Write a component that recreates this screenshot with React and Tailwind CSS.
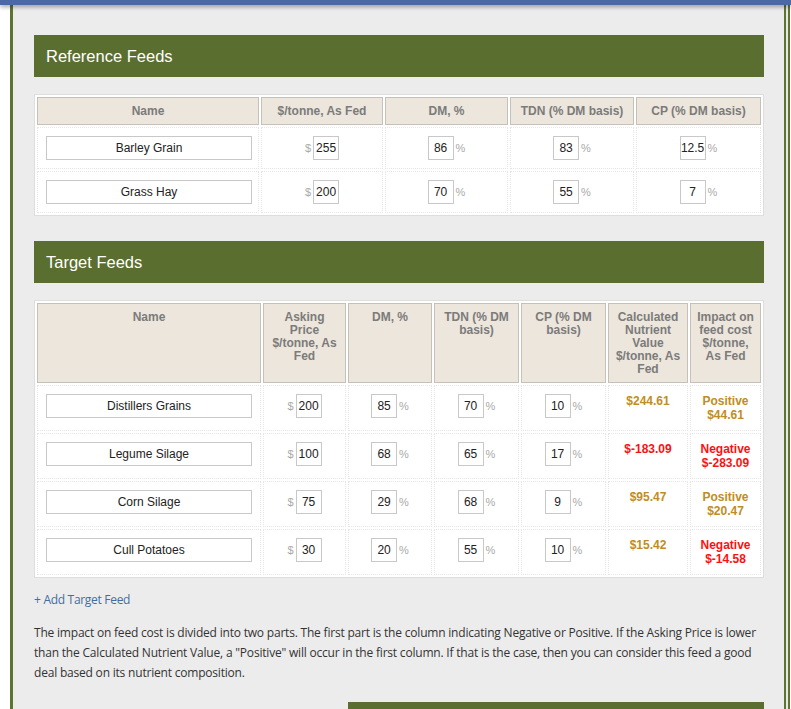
import React from "react";

const refFeeds = [
  { name: "Barley Grain", price: "255", dm: "86", tdn: "83", cp: "12.5" },
  { name: "Grass Hay", price: "200", dm: "70", tdn: "55", cp: "7" },
];

const targetFeeds = [
  { name: "Distillers Grains", price: "200", dm: "85", tdn: "70", cp: "10", calc: "$244.61", calcGood: true, sign: "Positive", impact: "$44.61", good: true },
  { name: "Legume Silage", price: "100", dm: "68", tdn: "65", cp: "17", calc: "$-183.09", calcGood: false, sign: "Negative", impact: "$-283.09", good: false },
  { name: "Corn Silage", price: "75", dm: "29", tdn: "68", cp: "9", calc: "$95.47", calcGood: true, sign: "Positive", impact: "$20.47", good: true },
  { name: "Cull Potatoes", price: "30", dm: "20", tdn: "55", cp: "10", calc: "$15.42", calcGood: true, sign: "Negative", impact: "$-14.58", good: false },
];

function SectionHeader({ title }) {
  return (
    <div className="h-[42px] bg-[#5a6e2f] flex items-center px-3">
      <h2 className="text-white text-[16.5px] font-['Liberation_Sans',Arial,sans-serif]">{title}</h2>
    </div>
  );
}

function SmallInput({ value }) {
  return (
    <input
      readOnly
      value={value}
      className="block w-[26px] h-[24px] border border-[#c8c8c8] bg-white text-center text-[12px] text-[#222] outline-none px-0"
    />
  );
}

function NameInput({ value }) {
  return (
    <input
      readOnly
      value={value}
      className="block w-[206px] h-[24px] mx-auto border border-[#c8c8c8] bg-white text-center text-[12px] text-[#222] outline-none"
    />
  );
}

function Price({ value }) {
  return (
    <div className="flex items-center justify-center gap-[2px] h-[24px]">
      <span className="text-[11px] text-[#aaa]">$</span>
      <SmallInput value={value} />
    </div>
  );
}

function Pct({ value }) {
  return (
    <div className="flex items-center justify-center gap-[2px] h-[24px]">
      <SmallInput value={value} />
      <span className="text-[11px] text-[#aaa]">%</span>
    </div>
  );
}

// header cell base (horizontal padding set per column)
const th = "bg-[#ede6dc] border border-[#c6c1b8] align-top text-center text-[12px] leading-[13px] font-bold text-[#7b7b7b] pt-[7px] pb-[6px]";
const td = "border border-dotted border-[#e6e6e6] py-[8px] align-top text-center";

export default function App() {
  return (
    <div className="w-[791px] h-[709px] overflow-hidden bg-white relative font-['Liberation_Sans',Arial,sans-serif]">
      {/* top bar */}
      <div className="absolute top-0 left-0 right-0 h-[5px] bg-[#4a69a6] shadow-[0_2px_4px_rgba(0,0,0,0.35)] z-10"></div>

      <div className="flex h-full">
        <div className="w-[10px] bg-white"></div>
        <div className="w-[3px] bg-[#5e7530]"></div>

        {/* main */}
        <div className="flex-1 bg-[#ececec] pl-[21px] pr-[20px] pt-[35px]">
          <SectionHeader title="Reference Feeds" />

          <div className="mt-[17px] bg-white border border-[#dedede]">
            <table className="w-full table-fixed border-separate border-spacing-[2px]">
              <thead>
                <tr>
                  <th className={`${th} px-[7px] w-[222px]`}>Name</th>
                  <th className={`${th} px-[7px] w-[122px]`}>$/tonne, As Fed</th>
                  <th className={`${th} px-[7px] w-[123px]`}>DM, %</th>
                  <th className={`${th} px-[7px] w-[124px]`}>TDN (% DM basis)</th>
                  <th className={`${th} px-[7px]`}>CP (% DM basis)</th>
                </tr>
              </thead>
              <tbody>
                {refFeeds.map((f) => (
                  <tr key={f.name}>
                    <td className={`${td} px-[8px]`}><NameInput value={f.name} /></td>
                    <td className={`${td} px-[8px]`}><Price value={f.price} /></td>
                    <td className={`${td} px-[8px]`}><Pct value={f.dm} /></td>
                    <td className={`${td} px-[8px]`}><Pct value={f.tdn} /></td>
                    <td className={`${td} px-[8px]`}><Pct value={f.cp} /></td>
                  </tr>
                ))}
              </tbody>
            </table>
          </div>

          <div className="mt-[25px]">
            <SectionHeader title="Target Feeds" />
          </div>

          <div className="mt-[17px] bg-white border border-[#dedede]">
            <table className="w-full table-fixed border-separate border-spacing-[2px]">
              <thead>
                <tr>
                  <th className={`${th} px-[7px] w-[224px]`}>Name</th>
                  <th className={`${th} px-[7px] w-[83px]`}>Asking Price $/tonne, As Fed</th>
                  <th className={`${th} px-[7px] w-[84px]`}>DM, %</th>
                  <th className={`${th} px-[7px] w-[85px]`}>TDN (% DM basis)</th>
                  <th className={`${th} px-[7px] w-[85px]`}>CP (% DM basis)</th>
                  <th className={`${th} px-[2px] w-[80px]`}>Calculated Nutrient Value $/tonne, As Fed</th>
                  <th className={`${th} px-[4px]`}>Impact on feed cost $/tonne, As Fed</th>
                </tr>
              </thead>
              <tbody>
                {targetFeeds.map((f) => {
                  const calcColor = f.calcGood ? "text-[#c18d22]" : "text-[#ff1010]";
                  const color = f.good ? "text-[#c18d22]" : "text-[#ff1010]";
                  return (
                    <tr key={f.name}>
                      <td className={`${td} px-[8px]`}><NameInput value={f.name} /></td>
                      <td className={`${td} px-[8px]`}><Price value={f.price} /></td>
                      <td className={`${td} px-[8px]`}><Pct value={f.dm} /></td>
                      <td className={`${td} px-[8px]`}><Pct value={f.tdn} /></td>
                      <td className={`${td} px-[8px]`}><Pct value={f.cp} /></td>
                      <td className={`${td} px-[2px] text-[12px] leading-[14px] font-bold ${calcColor}`}>{f.calc}</td>
                      <td className={`${td} px-0 text-[12px] leading-[14px] font-bold ${color}`}>
                        <div>{f.sign}</div>
                        <div>{f.impact}</div>
                      </td>
                    </tr>
                  );
                })}
              </tbody>
            </table>
          </div>

          <div className="mt-[13px] text-[12px] text-[#3c6fa6] font-['Open_Sans',sans-serif] tracking-[-0.3px]">+ Add Target Feed</div>

          <p className="mt-[14px] text-[12px] leading-[20px] text-[#333] font-['Open_Sans',sans-serif] tracking-[-0.2px]">
            The impact on feed cost is divided into two parts. The first part is the column indicating Negative or Positive. If the Asking Price is lower than the Calculated Nutrient Value, a "Positive" will occur in the first column. If that is the case, then you can consider this feed a good deal based on its nutrient composition.
          </p>

          <div className="mt-[19px] ml-auto w-[416px] h-[40px] bg-[#5a6e2f]"></div>
        </div>

        {/* right double border */}
        <div className="w-[2px] bg-[#5e7530]"></div>
        <div className="w-[2px] bg-[#e8e8e8]"></div>
        <div className="w-[2px] bg-[#5e7530]"></div>
        <div className="w-[1px] bg-white"></div>
      </div>
    </div>
  );
}
